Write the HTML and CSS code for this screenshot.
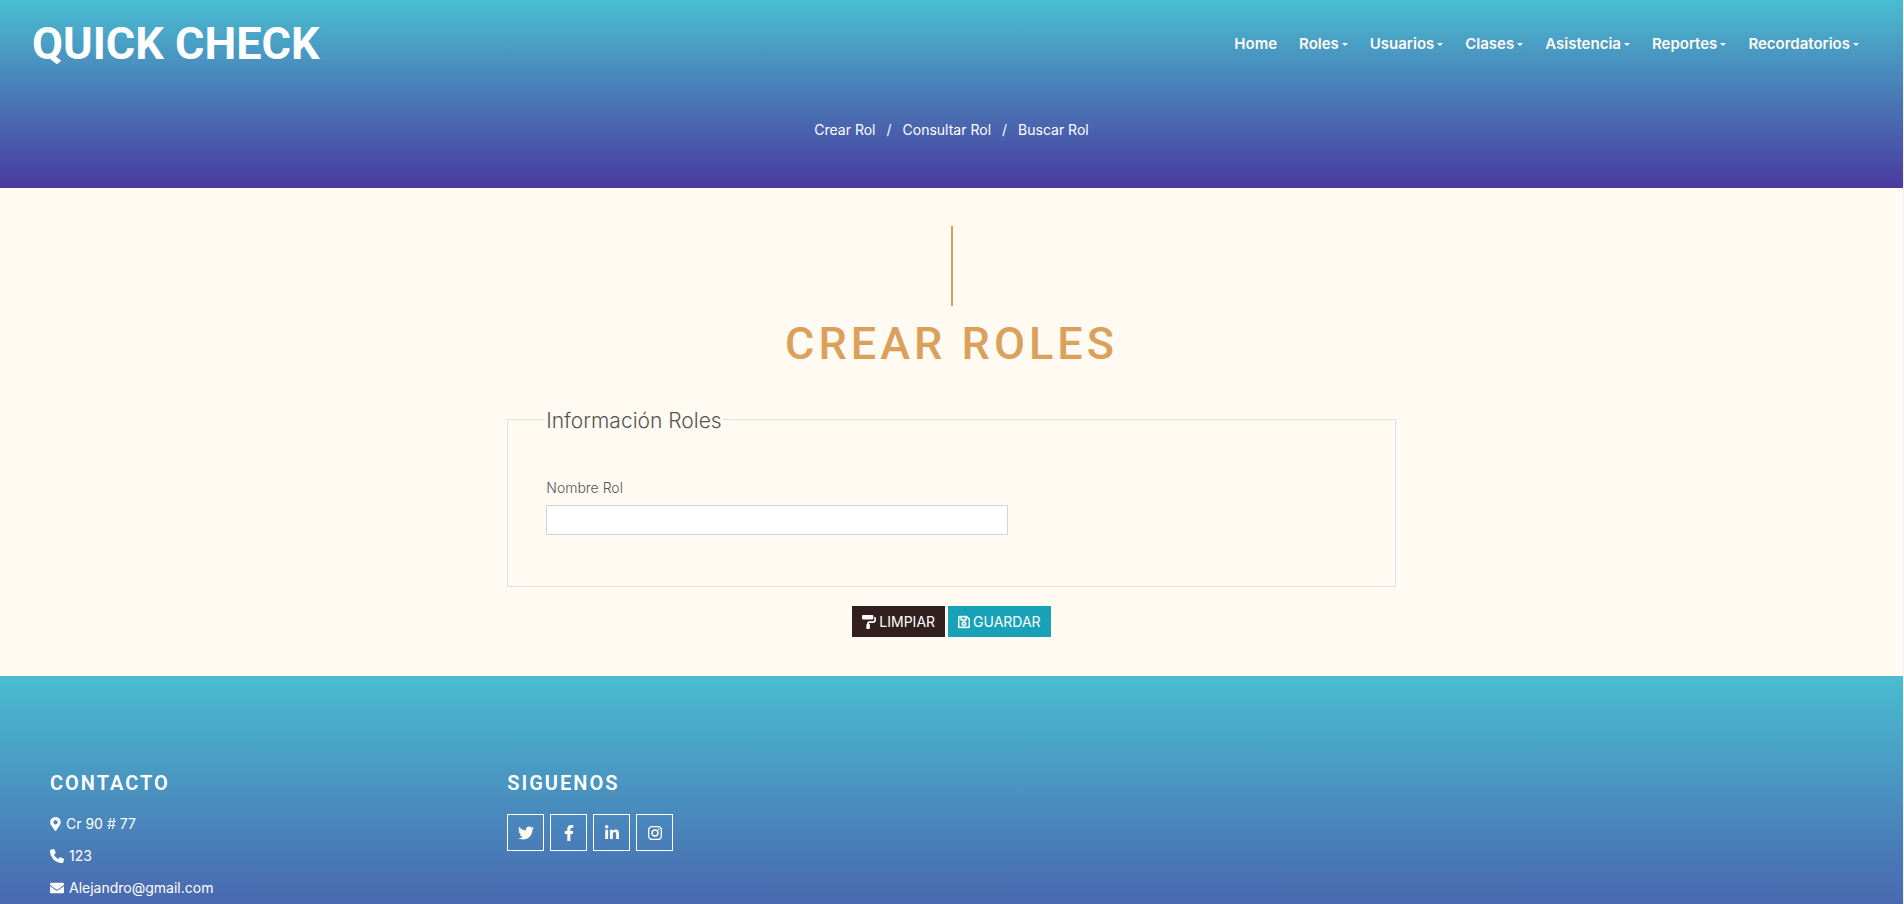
FILE: index.html
```html
<!DOCTYPE html>
<html lang="es">
<head>
<meta charset="utf-8">
<meta name="viewport" content="width=device-width, initial-scale=1">
<title>Quick Check - Crear Roles</title>
<link rel="stylesheet" href="styles.css">
</head>
<body>
<header class="site-header">
  <div class="navbar">
    <a class="brand" href="#">QUICK CHECK</a>
    <nav class="menu">
      <a href="#">Home</a>
      <a class="dropdown" href="#">Roles</a>
      <a class="dropdown" href="#">Usuarios</a>
      <a class="dropdown" href="#">Clases</a>
      <a class="dropdown" href="#">Asistencia</a>
      <a class="dropdown" href="#">Reportes</a>
      <a class="dropdown" href="#">Recordatorios</a>
    </nav>
  </div>
  <nav class="breadcrumb">
    <a href="#">Crear Rol</a><span>/</span><a href="#">Consultar Rol</a><span>/</span><a href="#">Buscar Rol</a>
  </nav>
</header>
<main class="content">
  <div class="rule"></div>
  <h1 class="title">CREAR ROLES</h1>
  <form class="role-form">
    <fieldset class="group">
      <legend>Información Roles</legend>
      <label for="nombre">Nombre Rol</label>
      <input id="nombre" type="text">
    </fieldset>
    <div class="actions">
      <button class="btn btn-dark" type="reset"><svg width="14" height="14" viewBox="0 0 512 512"><path d="M416 128V32c0-17.700-14.300-32-32-32H32C14.300 0 0 14.300 0 32v96c0 17.700 14.300 32 32 32h352c17.700 0 32-14.300 32-32zm32-64v128c0 17.700-14.300 32-32 32H256c-35.300 0-64 28.700-64 64v32c-17.700 0-32 14.300-32 32v128c0 17.700 14.300 32 32 32h64c17.700 0 32-14.300 32-32V352c0-17.700-14.300-32-32-32v-32h160c53 0 96-43 96-96v-64c0-35.300-28.700-64-64-64z"/></svg>LIMPIAR</button>
      <button class="btn btn-info" type="submit"><svg width="12" height="14" viewBox="0 0 448 512" stroke="currentColor" stroke-width="14"><path fill-rule="evenodd" d="M433.900 129.900l-83.800-83.800A48 48 0 0 0 316.100 32H48C21.500 32 0 53.500 0 80v352c0 26.500 21.500 48 48 48h352c26.500 0 48-21.500 48-48V163.900a48 48 0 0 0-14.100-34zM272 80v80H144V80h128zm122 352H54c-3.300 0-6-2.700-6-6V86c0-3.300 2.700-6 6-6h42v104c0 13.300 10.700 24 24 24h176c13.300 0 24-10.700 24-24V83.900l78.200 78.200a6 6 0 0 1 1.800 4.200V426c0 3.300-2.700 6-6 6zM224 232c-48.500 0-88 39.500-88 88s39.500 88 88 88 88-39.500 88-88-39.500-88-88-88zm0 128c-22.100 0-40-17.900-40-40s17.900-40 40-40 40 17.900 40 40-17.900 40-40 40z"/></svg>GUARDAR</button>
    </div>
  </form>
</main>
<footer class="site-footer">
  <section>
    <h2>CONTACTO</h2>
    <ul class="contact">
      <li><svg width="11" height="14" viewBox="0 0 384 512"><path d="M172.300 501.700C27 291 0 269.400 0 192 0 86 86 0 192 0s192 86 192 192c0 77.400-27 99-172.300 309.700-9.500 13.800-29.900 13.800-39.400 0zM192 272c44.200 0 80-35.800 80-80s-35.800-80-80-80-80 35.800-80 80 35.800 80 80 80z"/></svg>Cr 90 # 77</li>
      <li><svg width="14" height="14" viewBox="0 0 512 512"><path d="M164.900 24.600c-7.700-18.600-28-28.500-47.400-23.200l-88 24C12.100 30.200 0 46 0 64c0 247.400 200.600 448 448 448 18 0 33.800-12.100 38.600-29.500l24-88c5.300-19.400-4.600-39.700-23.200-47.400l-96-40c-16.300-6.800-35.200-2.100-46.300 11.600L304.700 368C234.300 334.700 177.300 277.700 144 207.300l49.300-40.400c13.700-11.200 18.400-30 11.600-46.300l-40-96z"/></svg>123</li>
      <li><svg width="14" height="14" viewBox="0 0 512 512"><path d="M502.300 190.800c3.900-3.100 9.700-.2 9.700 4.700V400c0 26.500-21.500 48-48 48H48c-26.500 0-48-21.500-48-48V195.600c0-5 5.700-7.800 9.700-4.700 22.400 17.400 52.100 39.500 154.100 113.600 21.100 15.400 56.700 47.800 92.200 47.600 35.700.3 72-32.800 92.300-47.600 102-74.100 131.600-96.300 154-113.700zM256 320c23.200.4 56.600-29.200 73.400-41.400 132.700-96.300 142.800-104.700 173.400-128.700 5.800-4.500 9.200-11.500 9.200-18.900v-19c0-26.500-21.500-48-48-48H48c-26.500 0-48 21.500-48 48v19c0 7.400 3.400 14.300 9.200 18.900 30.600 23.900 40.700 32.400 173.400 128.700 16.800 12.200 50.200 41.800 73.400 41.400z"/></svg>Alejandro@gmail.com</li>
    </ul>
  </section>
  <section>
    <h2>SIGUENOS</h2>
    <div class="social">
      <a href="#" aria-label="Twitter"><svg width="16" height="16" viewBox="0 0 512 512"><path d="M459.370 151.716c.325 4.548.325 9.097.325 13.645 0 138.720-105.583 298.558-298.558 298.558-59.452 0-114.680-17.219-161.137-47.106 8.447.974 16.568 1.299 25.340 1.299 49.055 0 94.213-16.568 130.274-44.832-46.132-.975-84.792-31.188-98.112-72.772 6.498.974 12.995 1.624 19.818 1.624 9.421 0 18.843-1.300 27.614-3.573-48.081-9.747-84.143-51.980-84.143-102.985v-1.299c13.969 7.797 30.214 12.670 47.431 13.319-28.264-18.843-46.781-51.005-46.781-87.391 0-19.492 5.197-37.360 14.294-52.954 51.655 63.675 129.300 105.258 216.365 109.807-1.624-7.797-2.599-15.918-2.599-24.040 0-57.828 46.782-104.934 104.934-104.934 30.213 0 57.502 12.670 76.670 33.137 23.715-4.548 46.456-13.320 66.599-25.340-7.798 24.366-24.366 44.833-46.132 57.827 21.117-2.273 41.584-8.122 60.426-16.243-14.292 20.791-32.161 39.308-52.628 54.253z"/></svg></a>
      <a href="#" aria-label="Facebook"><svg width="10" height="16" viewBox="0 0 320 512"><path d="M279.140 288l14.220-92.660h-88.910v-60.130c0-25.350 12.420-50.060 52.240-50.060h40.420V6.260S260.430 0 225.360 0c-73.220 0-121.080 44.380-121.080 124.720v70.620H22.890V288h81.390v224h100.170V288z"/></svg></a>
      <a href="#" aria-label="LinkedIn"><svg width="14" height="16" viewBox="0 0 448 512"><path d="M100.280 448H7.400V148.900h92.880zM53.790 108.100C24.090 108.100 0 83.500 0 53.800a53.790 53.790 0 0 1 107.580 0c0 29.700-24.100 54.300-53.790 54.300zM447.900 448h-92.680V302.400c0-34.700-.7-79.200-48.290-79.200-48.290 0-55.690 37.700-55.690 76.700V448h-92.780V148.900h89.080v40.800h1.300c12.400-23.500 42.690-48.300 87.880-48.300 94 0 111.280 61.900 111.280 142.300V448z"/></svg></a>
      <a href="#" aria-label="Instagram"><svg width="14" height="16" viewBox="0 0 448 512"><rect x="20" y="52" width="408" height="408" rx="110" fill="none" stroke="currentColor" stroke-width="46"/><circle cx="224" cy="256" r="95" fill="none" stroke="currentColor" stroke-width="46"/><circle cx="344" cy="137" r="27"/></svg></a>
    </div>
  </section>
</footer>
</body>
</html>
```
FILE: styles.css
```css
* { box-sizing: border-box; }

html { height: 100%; overflow: hidden; }

body {
  margin: 0;
  height: 100%;
  overflow: hidden;
  border-right: 1px solid #f1f1f1;
  background: #fffaf2;
  color: #555;
  font: 400 14px/20px Inter, "Open Sans", sans-serif;
}

a { color: inherit; text-decoration: none; }
svg { fill: currentColor; flex: none; }

.site-header {
  background: linear-gradient(#49bdd0, #4a3a9f);
  color: #fff;
  padding-bottom: 48px;
}

.navbar {
  display: flex;
  justify-content: space-between;
  align-items: center;
  padding: 17px 44px 0 32px;
}

.brand {
  font: 700 45px/54px Roboto, sans-serif;
}

.menu {
  display: flex;
  gap: 22px;
  font-size: 15px;
  font-weight: 600;
  color: #fffaf2;
}

.dropdown { display: flex; align-items: center; gap: 3px; }

.dropdown::after {
  content: "";
  border: 3px solid transparent;
  border-top-color: currentColor;
  border-bottom: 0;
}

.breadcrumb {
  display: flex;
  justify-content: center;
  gap: 11px;
  margin-top: 49px;
}

.content { padding: 38px 37px 39px; }

.rule {
  width: 2px;
  height: 80px;
  margin: 0 auto;
  background: #dba05c;
}

.title {
  margin: 11px 0 33px;
  text-align: center;
  font: 500 45px/54px Roboto, sans-serif;
  letter-spacing: 4px;
  color: #dba05c;
}

.role-form {
  width: 50%;
  margin: 0 auto;
  padding: 0 13px;
}

.group {
  margin: 0;
  padding: 44px 38px 51px;
  border: 1px solid #dee2e6;
}

.group legend {
  padding: 4px 0 0;
  font-size: 21px;
  line-height: 26px;
  font-weight: 300;
}

.group label {
  display: block;
  margin-bottom: 7px;
  font-weight: 300;
}

.group input {
  display: block;
  width: 57%;
  height: 30px;
  padding: 4px 8px;
  border: 1px solid #ced4da;
  background: #fff;
  font: inherit;
}

.actions {
  display: flex;
  justify-content: center;
  gap: 3px;
  margin-top: 19px;
}

.btn {
  display: flex;
  align-items: center;
  gap: 3px;
  height: 31px;
  padding: 0 10px;
  border: 0;
  color: #fff;
  font: inherit;
}

.btn-dark { background: #32201e; }
.btn-info { background: #17a2b8; }

.site-footer {
  display: grid;
  grid-template-columns: repeat(4, 1fr);
  padding: 95px 37px 128px;
  background: linear-gradient(#49bdd0, #4a3a9f);
  color: #fff;
}

.site-footer section { padding: 0 13px; }

.site-footer h2 {
  margin: 0 0 18px;
  font: 600 20px/25px Roboto, sans-serif;
  letter-spacing: 2px;
}

.contact {
  display: grid;
  gap: 12px;
  margin: 0;
  padding: 0;
  list-style: none;
}

.contact li { display: flex; align-items: center; gap: 5px; }

.social { display: flex; gap: 6px; }

.social a {
  display: flex;
  align-items: center;
  justify-content: center;
  width: 37px;
  height: 37px;
  border: 1px solid #fff;
  color: #fffaf2;
}
```
